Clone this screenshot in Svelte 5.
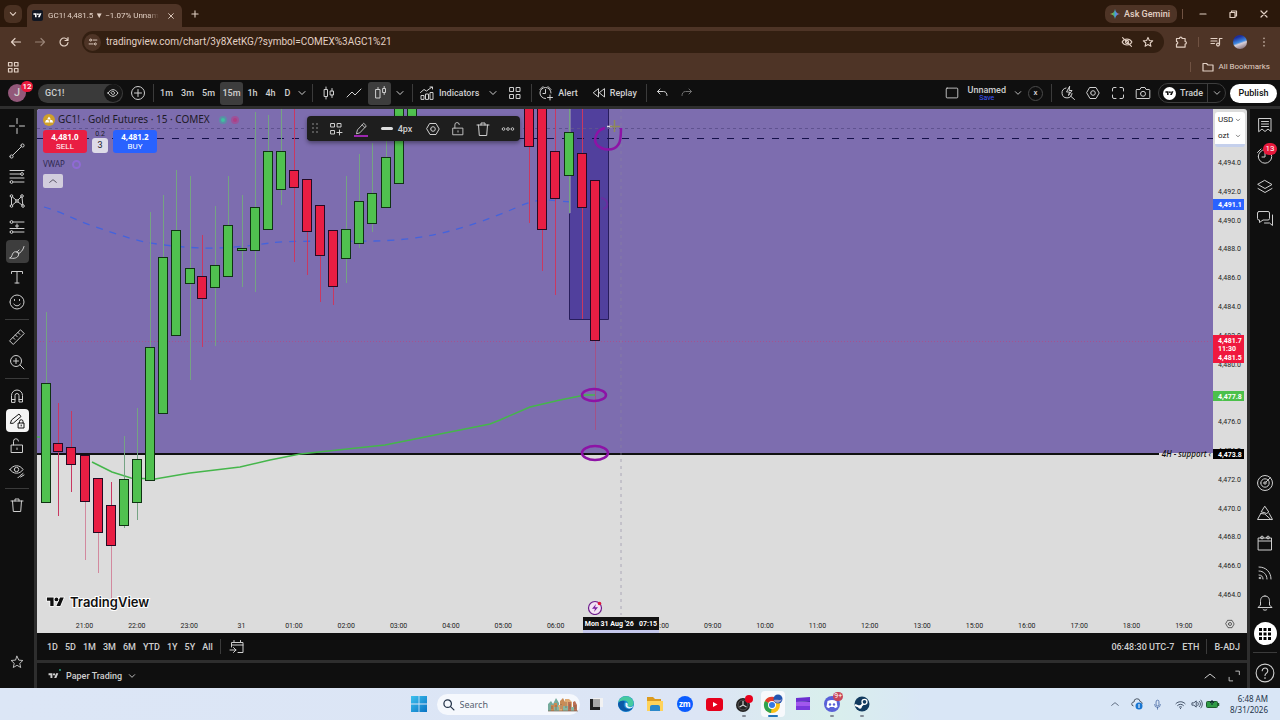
<script>
  const c = (x, y, r) => `M${x - r} ${y}a${r} ${r} 0 1 0 ${2 * r} 0a${r} ${r} 0 1 0 ${-2 * r} 0`;

  const icons = {
    down: 'M6 7.5l3 3 3-3',
    up: 'M4 11l5-4 5 4',
    close: 'M6 6l6 6M12 6l-6 6',
    plus: 'M9 5.5v7M5.5 9h7',
    back: 'M13.5 9h-9M8 5.5L4.500 9 8 12.500',
    forward: 'M4.500 9h9M10 5.500L13.500 9 10 12.500',
    reload: 'M12.500 7A4 4 0 1 0 13 9.500M13 4.500V7.500H10',
    tune: c(6, 6.5, 1.3) + c(12, 11.5, 1.3) + 'M9 6.5h5M4 11.500h5',
    apps: 'M4.500 4.500h3.500v3.500h-3.500zM10.500 4.500h3.500v3.500h-3.500zM4.500 10.500h3.500v3.500h-3.500zM10.500 10.500h3.500v3.500h-3.500z',
    eyeOff: 'M3.500 9C6 4.500 12 4.500 14.500 9C12 13.500 6 13.500 3.500 9zM4 4l10 10' + c(9, 9, 1.8),
    star: 'M9 3.800l1.500 3.500 3.800.3-2.900 2.500.9 3.700L9 11.800l-3.300 2 .9-3.700L3.700 7.600l3.800-.3z',
    bigStar: 'M9 2.500l2 4.400 4.600.4-3.500 3.200 1.100 4.700L9 12.700l-4.200 2.500 1.100-4.700L2.400 7.300 7 6.900z',
    puzzle: 'M4.500 5.500h3a1.300 1.300 0 0 1 2.600 0h3v3a1.300 1.300 0 0 1 0 2.600v3h-8.600v-3a1.300 1.300 0 0 0 0-2.600z',
    music: 'M4 5.500h6M4 8h6M4 10.500h3.500M12.500 11.500V5.500h2.500' + c(11, 11.5, 1.4),
    kebab: 'M9 5v.6M9 8.700v.6M9 12.400v.6',
    folder: 'M4 5.500h3.500l1.500 1.500h5v6h-10z',
    minimize: 'M6 9h6',
    restore: 'M6 7.500h5v5h-5zM7.500 7.500v-1.500h5v5h-1.500',
    eye: 'M4 9C7 4.500 11 4.500 14 9C11 13.500 7 13.500 4 9zM9 7.200L10.800 9 9 10.800 7.200 9z',
    plusCircle: c(9, 9, 6.5) + 'M9 5.500v7M5.500 9h7',
    candles: 'M4.500 5.500h3v7h-3zM6 3v2.500M6 12.500v2.500M10.500 7h3v4h-3zM12 4.500v2.500M12 11v2.500',
    line: 'M2 13l5-5 3 3 6-6',
    hollow: 'M5 5.500h4v8.500h-4zM7 3.500v2M12 4.500h2.500v4h-2.500zM13.200 2.500v2M13.200 8.500v2',
    indicators: 'M3 15v-3.500h3v3.500zM7.500 15v-5h3v5zM12 15v-6.500h3v6.500zM2.500 8.500l3.500-3 2.500 1.500 5.500-4M12 3h2.500v2',
    grid: 'M4 3.500h3.500v4h-3.500zM10.500 3.500h3.500v4h-3.500zM4 10.500h3.500v4h-3.500zM10.500 10.500h3.500v4h-3.500z',
    alarm: 'M14 9A5.500 5.500 0 1 0 8.500 14.500M8.500 5.500v4h-2.500M3 5.500l3-3M11 2.500l3 3M13 11v5M10.500 13.500h5',
    replay: 'M8.500 5v8L3.500 9zM14.500 5v8L9.500 9z',
    undo: 'M7 5L4.500 7.500 7 10M4.500 7.500h6c2.500 0 3.500 2 3.500 4',
    redo: 'M11 5l2.500 2.500L11 10M13.500 7.500h-6c-2.500 0-3.500 2-3.500 4',
    layout: 'M3.500 3.500h11a1 1 0 0 1 1 1v9a1 1 0 0 1-1 1h-11a1 1 0 0 1-1-1v-9a1 1 0 0 1 1-1z',
    quick: 'M7 4A5 5 0 1 0 13 9.500M11.500 12l4 3.500M10.500 2.500L7.500 8h3l-1 3.500L13 6.500h-2.500z',
    gear: 'M6 3.500h6l3.200 5.500-3.200 5.500H6L2.800 9z' + c(9, 9, 2.3),
    fullscreen: 'M3.500 7V5a1.500 1.500 0 0 1 1.500-1.500h2M11 3.500h2a1.500 1.500 0 0 1 1.500 1.500v2M14.500 11v2a1.500 1.500 0 0 1-1.500 1.500h-2M7 14.500H5a1.500 1.500 0 0 1-1.500-1.500v-2',
    camera: 'M3 5.500h3l1-2h4l1 2h3a.8.8 0 0 1 .8.8v7.400a.8.8 0 0 1-.8.8H3a.8.8 0 0 1-.8-.8V6.300a.8.8 0 0 1 .8-.8z' + c(9, 9.8, 2.5),
    cross: 'M9 1.500v5M9 11.500v5M1.500 9h5M11.500 9h5',
    trend: c(3.5, 14.5, 1.6) + c(14.5, 3.5, 1.6) + 'M4.700 13.300l8.600-8.600',
    fib: 'M2 3.500h14M2 7h10.500M2 11h14M5.500 15h10.500' + c(14, 7, 1.4) + c(3.5, 15, 1.4),
    pattern: c(3.5, 4, 1.3) + c(14, 4, 1.3) + c(3.5, 14, 1.3) + c(15, 14, 1.3) + c(9, 9, 1.3) + 'M3.500 5.300v7.400M14 5.300l.8 7.400M4.500 5l3.500 3M13 5l-3 3M4.500 13l3.500-3M10 10l4 3',
    forecast: c(3.5, 4, 1.4) + c(3.5, 14, 1.4) + 'M5 4h11M5 14h11M2 10.500h14M9 6v4.500M7.500 8h3',
    brush: 'M2 15c2.500-1 1.500-3.500 3.500-5.500 2-1.800 5.500 0 5 2.500-.6 3-4.500 4-8.500 3zM8.500 8.800c1.500-.3 2.500 1 2.300 2.200M10.500 10.500c2-.5 4.500-3 5.500-7M9.500 8.500l1.500-1.500',
    text: 'M3.500 5.500v-2h11v2M9 3.500v11.500M7 15h4',
    smile: c(9, 9, 7) + 'M5.800 11c1.500 2.500 5 2.500 6.400 0M6.500 6.500v1M11.500 6.500v1',
    ruler: 'M1.800 12.500L12.500 1.800l3.700 3.700L5.500 16.200zM5 9.500l1.800 1.800M7.500 7l1.800 1.800M10 4.500l1.800 1.800',
    zoom: c(8, 8, 5.5) + 'M12 12l4 4M8 5.500v5M5.500 8h5',
    magnet: 'M3.500 15V8.500a5.500 5.500 0 0 1 11 0V15h-3.500V8.500a2 2 0 0 0-4 0V15zM3.500 12.500h3.500M11 12.500h3.500',
    pencilLock: 'M2.500 11l1-3L11 2l2 2.500-7.500 6.500zM10.500 11h5.500v5h-5.500zM11.500 11V9.500a1.700 1.700 0 0 1 3.500 0V11M13.200 13v1',
    lock: 'M3.500 8h11v7.500h-11zM5.500 8V4.500a2.500 2.500 0 0 1 5-.5M9 11v1.500',
    hide: 'M2 7.500C5 2.500 12 2.500 15 7.500C12 12.500 5 12.500 2 7.500zM10 15.500c2-.2 1.500-2 3-2.500l2-1.500M12.500 15l3.500-2' + c(8.5, 7.5, 2.2),
    trash: 'M3 5h12M7 5V3h4v2M4.500 5l.8 10.500h7.400L13.500 5',
    pencil: 'M4 14l1-4 7-7.500 3 3L8 13z M10.500 4.500l3 3',
    addGrid: 'M4 3.500h3.500v3.500h-3.500zM10.500 3.500h3.500v3.500h-3.500zM4 10.500h3.500v3.500h-3.500zM12.500 10v5M10 12.500h5',
    more: c(4, 9, 1.5) + c(9, 9, 1.5) + c(14, 9, 1.5),
    calendarGo: 'M3.500 9V4.500h11.500v10h-5M3.500 7h11.500M6 2.500v2M12.500 2.500v2M2 12h6M5.500 9.500L8 12l-2.500 2.500',
    watch: 'M3 2.500h12v13l-3-2.500-3 2.500-3-2.500-3 2.500zM5.500 5.500h7M5.500 8h7M5.500 10.500h7',
    clock: c(9, 9.5, 6.7) + 'M9 5v5h-3M1.500 5.500l3.500-3.500',
    layers: 'M9 2.500l7 4-7 4-7-4zM2 10.500l7 4 7-4',
    chat: 'M3 2.500h9a1.500 1.500 0 0 1 1.500 1.500v5.500a1.500 1.500 0 0 1-1.500 1.500H7l-3.500 2.500V11H3a1.500 1.500 0 0 1-1.500-1.500V4A1.500 1.500 0 0 1 3 2.500zM16.500 6v10.500L13.500 14H8.500',
    target: c(9, 9, 7.5) + c(9, 9, 4.2) + c(9, 9, 1.2) + 'M10 8l4.500-4.500',
    mountain: 'M9 2.500l3.800 5.500-2.300 1.500L8 8.500 5.500 8zM4.800 9.500L1.500 15.500h15L13.200 9.500M4.800 9.500l4 .5 6 5.500',
    calendar: 'M2.500 4h13v12h-13zM2.500 7h13' + c(6, 3.5, 1.4) + c(12, 3.5, 1.4),
    feed: 'M3 3c7 0 12 5 12 12M3 7c4.500 0 8 3.500 8 8M3 11c2.500 0 4 1.500 4 4' + c(4, 14, .8),
    bell: 'M9 2c3.500 0 4.500 2.500 4.500 5.500v3.500l2.500 2.500H2L4.500 11V7.500C4.500 4.500 5.500 2 9 2zM7 15.500c.5 1 3.500 1 4 0',
    help: c(9, 9, 8) + 'M6.500 7a2.500 2.500 0 1 1 4 2c-1 .7-1.500 1-1.500 2.200M9 13v1',
    expand: 'M11 3.500h4v4M3.500 10.500v4h4',
    search: c(8, 8, 4.5) + 'M11.500 11.500l4 4',
    mic: 'M7 5a2 2 0 0 1 4 0v4a2 2 0 0 1-4 0zM5 9a4 4 0 0 0 8 0M9 13v2.500',
    wifi: 'M3.500 8c3-3.200 8-3.200 11 0M5.500 10.200c2-2 5-2 7 0M7.500 12.200c.8-.8 2.200-.8 3 0M9 13.500v.5',
    sound: 'M3 7.500h2l3-2.500v8l-3-2.500H3zM10 7c1 1.200 1 2.800 0 4M12 5.500c2 2 2 5 0 7M14 4c2.500 3 2.500 7 0 10'
  };

  // x, wick top, body top, body bottom, wick bottom, rising
  const candles = [
    [46, 312, 383, 502, 502, 1], [58, 403, 443, 451, 516, 0], [71, 411, 447, 464, 492, 0],
    [85, 455, 455, 501, 560, 0], [98, 478, 478, 532, 573, 0], [111, 482, 505, 545, 610, 0],
    [124, 436, 479, 525, 528, 1], [137, 408, 459, 502, 520, 1], [150, 212, 347, 480, 480, 1],
    [163, 195, 257, 413, 413, 1], [176, 170, 230, 335, 335, 1], [190, 176, 268, 283, 380, 1],
    [202, 235, 276, 298, 347, 0], [215, 206, 265, 287, 346, 1], [228, 176, 225, 276, 276, 1],
    [242, 195, 248, 250, 287, 1], [255, 112, 207, 250, 292, 1], [268, 115, 151, 229, 229, 1],
    [281, 100, 151, 189, 205, 1], [294, 100, 170, 187, 262, 0], [307, 179, 179, 231, 275, 0],
    [320, 205, 205, 255, 302, 0], [333, 230, 230, 286, 305, 0], [346, 176, 229, 258, 283, 1],
    [359, 154, 201, 243, 248, 1], [372, 143, 193, 223, 232, 1], [386, 140, 157, 207, 207, 1],
    [399, 100, 100, 183, 183, 1], [412, 100, 100, 116, 116, 1], [529, 100, 100, 146, 223, 0],
    [542, 100, 100, 229, 271, 0], [555, 100, 151, 198, 295, 0], [569, 100, 132, 175, 213, 1],
    [582, 100, 153, 207, 319, 0], [595, 180, 180, 340, 430, 0]
  ];

  // The 07:00 slot is left free for the crosshair's time stamp.
  const hours = ['21:00', '22:00', '23:00', '31', '01:00', '02:00', '03:00', '04:00', '05:00', '06:00', '', '08:00', '09:00', '10:00', '11:00', '12:00', '13:00', '15:00', '16:00', '17:00', '18:00', '19:00'];
  const prices = Array.from({ length: 16 }, (_, i) => ({ y: 56 + i * 28.8, text: `4,${494 - i * 2}.0` })).filter((p) => p.text !== '4,478.0');
  const tags = [
    [90, 11, '#2962ff', [['4,491.1', 98]]],
    [226, 28, '#f0183e', [['4,481.7', 234], ['11:30', 242], ['4,481.5', 251]]],
    [282, 10, '#4bc04b', [['4,477.8', 290]]],
    [340, 10, '#000', [['4,473.8', 348]]]
  ];

  const drawTools = [
    ['cross', 'trend', 'fib', 'pattern', 'forecast', 'brush', 'text', 'smile'],
    ['ruler', 'zoom'],
    ['magnet', 'pencilLock', 'lock', 'hide'],
    ['trash']
  ];
  const frames = ['1m', '3m', '5m', '15m', '1h', '4h', 'D'];
  const ranges = ['1D', '5D', '1M', '3M', '6M', 'YTD', '1Y', '5Y', 'All'];
  let frame = $state('15m');
  let query = $state('');
</script>

{#snippet icon(name, size = 18)}
  <svg class="icon" width={size} height={size} viewBox="0 0 18 18" aria-hidden="true"><path d={icons[name]} /></svg>
{/snippet}

{#snippet mark(width)}
  <svg class="mark" {width} height={width / 2} viewBox="0 3 36 20" aria-hidden="true"><path d="M14 22H7V11H0V4h14zM28 22h-8l7.500-18h8z" /><circle cx="20" cy="8" r="4" /></svg>
{/snippet}

<div class="screen">
  <header class="browser">
    <div class="tabs">
      <button class="tab-search" aria-label="Search tabs">{@render icon('down', 16)}</button>
      <div class="tab">
        <span class="favicon">{@render mark(9)}</span>
        <span class="tab-title">GC1! 4,481.5 ▼ −1.07% Unnam</span>
        <button aria-label="Close tab">{@render icon('close', 14)}</button>
      </div>
      <button class="new-tab" aria-label="New tab">{@render icon('plus', 16)}</button>
      <span class="grow"></span>
      <button class="gemini">
        <svg width="10" height="10" viewBox="0 0 10 10"><defs><linearGradient id="gem"><stop offset="0" stop-color="#ffd23f" /><stop offset=".35" stop-color="#4fb56c" /><stop offset=".6" stop-color="#4b8df8" /><stop offset="1" stop-color="#e0645c" /></linearGradient></defs><path fill="url(#gem)" d="M5 0C5.500 3 7 4.500 10 5C7 5.500 5.500 7 5 10C4.500 7 3 5.500 0 5C3 4.500 4.500 3 5 0z" /></svg>
        Ask Gemini
      </button>
      <i class="vr warm"></i>
      <button class="win" aria-label="Minimize">{@render icon('minimize')}</button>
      <button class="win" aria-label="Restore">{@render icon('restore')}</button>
      <button class="win" aria-label="Close">{@render icon('close')}</button>
    </div>
    <div class="address">
      <button class="nav" aria-label="Back">{@render icon('back')}</button>
      <button class="nav dim" aria-label="Forward">{@render icon('forward')}</button>
      <button class="nav" aria-label="Reload">{@render icon('reload')}</button>
      <div class="url">
        <button class="site" aria-label="Site information">{@render icon('tune', 14)}</button>
        <input aria-label="Address" value="tradingview.com/chart/3y8XetKG/?symbol=COMEX%3AGC1%21" />
        <button aria-label="Tracking blocked">{@render icon('eyeOff', 16)}</button>
        <button aria-label="Bookmark">{@render icon('star', 16)}</button>
      </div>
      <button class="ext" aria-label="Extensions">{@render icon('puzzle')}</button>
      <i class="vr warm"></i>
      <button class="ext" aria-label="Media">{@render icon('music')}</button>
      <button class="profile" aria-label="Profile"></button>
      <button class="ext" aria-label="Menu">{@render icon('kebab')}</button>
    </div>
    <div class="bookmarks">
      <button aria-label="Apps">{@render icon('apps')}</button>
      <span class="grow"></span>
      <i class="vr warm"></i>
      <button class="all">{@render icon('folder', 18)}All Bookmarks</button>
    </div>
  </header>

  <div class="app">
    <nav class="topbar">
      <button class="avatar" aria-label="Account"><span class="user">J</span><span class="badge">12</span></button>
      <button class="symbol">GC1!<span class="round">{@render icon('eye')}</span></button>
      <button class="w30" aria-label="Compare">{@render icon('plusCircle')}</button>
      <i class="vr"></i>
      <div class="frames">
        {#each frames as f}
          <button class:on={frame === f} onclick={() => (frame = f)}>{f}</button>
        {/each}
        <button aria-label="More intervals">{@render icon('down')}</button>
      </div>
      <i class="vr"></i>
      <div class="styles">
        <button class="w25" aria-label="Candles">{@render icon('candles')}</button>
        <button class="w25" aria-label="Line">{@render icon('line')}</button>
        <button class="hollow on" aria-label="Hollow candles">{@render icon('hollow')}</button>
        <button class="w18" aria-label="More styles">{@render icon('down')}</button>
      </div>
      <i class="vr"></i>
      <button class="labelled">{@render icon('indicators')}Indicators</button>
      <button class="w27" aria-label="Favourite indicators">{@render icon('down')}</button>
      <button class="w18" aria-label="Templates">{@render icon('grid')}</button>
      <i class="vr after"></i>
      <button class="labelled">{@render icon('alarm')}Alert</button>
      <button class="labelled replay">{@render icon('replay')}Replay</button>
      <i class="vr after"></i>
      <button class="w25" aria-label="Undo">{@render icon('undo')}</button>
      <button class="w25 dim" aria-label="Redo">{@render icon('redo')}</button>
      <span class="grow"></span>
      <button class="w23" aria-label="Layout">{@render icon('layout', 16)}</button>
      <button class="saved">Unnamed<small>Save</small></button>
      <button class="w18" aria-label="Layouts">{@render icon('down', 16)}</button>
      <button class="xcircle" aria-label="Close layout">x</button>
      <i class="vr"></i>
      <div class="tools">
        <button class="w25" aria-label="Quick search">{@render icon('quick')}</button>
        <button class="w25" aria-label="Settings">{@render icon('gear')}</button>
        <button class="w25" aria-label="Fullscreen">{@render icon('fullscreen')}</button>
        <button class="w25" aria-label="Snapshot">{@render icon('camera')}</button>
      </div>
      <div class="trade">
        <button class="trade-main"><span class="disc">{@render mark(9)}</span>Trade</button>
        <button class="trade-more" aria-label="Trade options">{@render icon('down', 16)}</button>
      </div>
      <button class="publish">Publish</button>
    </nav>

    <div class="body">
      <aside class="left">
        {#each drawTools as group, g}
          {#if g}<hr />{/if}
          <div class="group">
            {#each group as tool}
              <button class="tool" class:on={tool === 'brush'} class:locked={tool === 'pencilLock'} aria-label={tool}>{@render icon(tool)}</button>
            {/each}
          </div>
        {/each}
        <span class="grow"></span>
        <button class="tool fav" aria-label="Favourites">{@render icon('bigStar', 16)}</button>
      </aside>

      <main>
        <section class="chart">
          <div class="plot">
            <svg class="canvas" width="100%" height="100%">
              <rect width="100%" height="345" fill="#7d6daf" />
              <g transform="translate(-37 -109)">
                <rect x="569" y="100" width="39" height="219" fill="#51409d" />
                <rect x="569" y="100" width="2" height="113" fill="#7d76a6" />
                <path class="edge" d="M569.500 214v105.500h39v-219" />
              </g>
              <line class="thin" x1="0" x2="100%" y1="19.500" y2="19.500" />
              <line class="dash" x1="0" x2="100%" y1="29.500" y2="29.500" />
              <line class="last" x1="0" x2="100%" y1="232.500" y2="232.500" />
              <line x1="0" x2="100%" y1="345" y2="345" stroke="#111" stroke-width="2" />
              <g transform="translate(-37 -109)">
                <path class="blue" d="M44 207C65 213 75 220 90 225S130 239 145 242S180 247 200 248S250 246 270 243S340 242 375 241S430 236 450 231S495 217 520 206S555 203 582 202" />
                <path class="green" d="M37 437h3M92 462L112 472L131 478L155 479L190 473L240 467L270 460L300 454L385 445L430 436L490 424L500 420L530 407L560 400L585 395L595 395" />
                {#each candles as [x, high, top, bottom, low, rising]}
                  <line x1={x + 0.5} x2={x + 0.5} y1={high} y2={top} class:rising={rising} class="wick" />
                  <line x1={x + 0.5} x2={x + 0.5} y1={bottom} y2={low} class:rising={rising} class="wick" class:faint={low > 550 || x === 595} />
                  <rect x={x - 4.5} y={top + 0.5} width="9" height={bottom - top} class="bar" class:rising={rising} />
                {/each}
                <path class="cross-line" d="M621 109V615" />
                <ellipse class="ink" cx="594" cy="395" rx="12" ry="6" />
                <ellipse class="ink" cx="595" cy="453" rx="13" ry="7" />
                <path class="ink" d="M605 128C596 130 593 140 597 145C603 151 614 151 618 145C621 142 621 135 621 128" />
                <path class="ink soft" d="M601 198C608 199 610 207 603 209" />
                <path d="M607 126.500h5" stroke="#ddd" stroke-width="1.500" /><path d="M614.500 120v12M610 126.500h10" stroke="#8f8a5a" stroke-width="1.500" />
                <g transform="translate(595 608)"><circle r="6.500" fill="#f3e3f5" stroke="#6d1b8c" stroke-width="1.200" /><path d="M1 -4L-3 .8H0L-1 4L3 -.8H0z" fill="#7b1fa2" /><circle cx="4.500" cy="-4.500" r="1.800" fill="#e0183c" /></g>
              </g>
            </svg>
            <span class="support">4H - support&nbsp;‹</span>
            <div class="legend">
              <h1>
                <svg width="12" height="12" viewBox="0 0 12 12"><circle cx="6" cy="6" r="6" fill="#cfa02a" /><path d="M6 2.500L8 5.500H4zM3 6h2.500l.7 2.500H2zM6.800 6h2.400l1 2.500H6.500z" fill="#fff" /></svg>
                GC1! · Gold Futures · 15 · COMEX
                <i class="dot open"></i><i class="dot delay"></i>
              </h1>
              <div class="quotes">
                <button class="sell"><b>4,481.0</b>SELL</button>
                <span class="spread">0.2<b>3</b></span>
                <button class="buy"><b>4,481.2</b>BUY</button>
              </div>
              <p class="study">VWAP <i></i></p>
              <button class="fold" aria-label="Collapse">{@render icon('up', 12)}</button>
            </div>
            <div class="floating">
              <span class="grip"></span>
              <button aria-label="Template">{@render icon('addGrid')}</button>
              <button class="color" aria-label="Line colour">{@render icon('pencil', 16)}</button>
              <button class="thick"><i></i>4px</button>
              <button aria-label="Settings">{@render icon('gear')}</button>
              <button aria-label="Lock">{@render icon('lock', 16)}</button>
              <button aria-label="Remove">{@render icon('trash')}</button>
              <button aria-label="More">{@render icon('more', 16)}</button>
            </div>
            <div class="brand">{@render mark(19)}TradingView</div>
          </div>
          <div class="price-axis">
            <svg width="100%" height="100%">
              {#each prices as p}
                <text x="5" y={p.y}>{p.text}</text>
              {/each}
              {#each tags as [y, h, fill, lines]}
                <rect x="0" {y} width="31" height={h} {fill} />
                {#each lines as [t, ty]}<text class="tag" x="5" y={ty}>{t}</text>{/each}
              {/each}
            </svg>
            <div class="units">
              <button>USD {@render icon('down', 10)}</button>
              <button>ozt {@render icon('down', 10)}</button>
            </div>
          </div>
          <div class="time-axis">
            <svg width="100%" height="100%">
              {#each hours as h, i}
                {#if h}<text x={47.5 + i * 52.35} y="13" text-anchor="middle">{h}</text>{/if}
              {/each}
            </svg>
            <span class="stamp">Mon 31 Aug '26&nbsp;&nbsp; 07:15</span>
          </div>
          <button class="axis-gear" aria-label="Axis settings">{@render icon('gear', 12)}</button>
        </section>

        <footer class="ranges">
          {#each ranges as r}<button>{r}</button>{/each}
          <i class="vr"></i>
          <button aria-label="Go to date">{@render icon('calendarGo')}</button>
          <span class="grow"></span>
          <button class="wide">06:48:30 UTC-7</button>
          <button>ETH</button>
          <i class="vr"></i>
          <button>B-ADJ</button>
        </footer>
        <footer class="panel">
          {@render mark(11)}<i class="online"></i>
          <button class="paper">Paper Trading {@render icon('down', 16)}</button>
          <span class="grow"></span>
          <button aria-label="Open panel">{@render icon('up')}</button>
          <button aria-label="Maximize panel">{@render icon('expand', 16)}</button>
        </footer>
      </main>

      <aside class="right">
        <button class="side" aria-label="Watchlist">{@render icon('watch')}</button>
        <button class="side" aria-label="Alerts">{@render icon('clock')}<span class="badge">13</span></button>
        <button class="side" aria-label="Layers">{@render icon('layers')}</button>
        <button class="side" aria-label="Chat">{@render icon('chat')}</button>
        <span class="grow"></span>
        {#each ['target', 'mountain', 'calendar', 'feed', 'bell'] as name}
          <button class="side low" aria-label={name}>{@render icon(name)}</button>
        {/each}
        <button class="dots" aria-label="Products"><svg width="12" height="12" viewBox="0 0 12 12">{#each [0, 4.500, 9] as y}{#each [0, 4.500, 9] as x}<rect {x} {y} width="3" height="3" />{/each}{/each}</svg></button>
        <hr />
        <button class="side help" aria-label="Help">{@render icon('help', 20)}</button>
      </aside>
    </div>
  </div>

  <footer class="taskbar">
    <span></span>
    <div class="dock">
      <button class="start" aria-label="Start"><svg width="16" height="16" viewBox="0 0 16 16"><defs><linearGradient id="win" x2="1" y2="1"><stop offset="0" stop-color="#3ec1ee" /><stop offset="1" stop-color="#0873c4" /></linearGradient></defs><path fill="url(#win)" d="M0 0h7.600v7.600H0zM8.400 0H16v7.600H8.400zM0 8.400h7.600V16H0zM8.400 8.400H16V16H8.400z" /></svg></button>
      <label class="find">
        {@render icon('search', 15)}
        <input placeholder="Search" bind:value={query} aria-label="Search" />
        <svg width="30" height="15" viewBox="0 0 30 15"><path fill="#75ab9c" d="M0 14V7l3-3 2 3 3-6 3 5V14z" /><path fill="#c98b55" d="M3 14V8h3V6h3v8zM12 14V4l3-3 2 4v9z" /><path fill="#e0ab72" d="M10 14V8h4v6zM17 14V2h4l3 3v9z" /><path fill="#ba6f54" d="M20 5h3v9h-3zM25 14V5l2-1 2 4v6z" /><path fill="#88b5a2" d="M6 10h5v4H6zM15 9h5v5h-5zM23 10h3v4h-3z" /><path stroke="#7a6048" stroke-width=".7" d="M4 9v3M8 8v5M13 7v5M18 5v6M22 7v5M27 8v4M0 14h30" /></svg>
      </label>
      <div class="apps">
        <button aria-label="Task view"><svg width="16" height="16" viewBox="0 0 16 16"><path fill="#f2f2f2" d="M5 2h10v9H5z" /><path fill="#222" d="M2 3h3v8h7v3H2z" /><path fill="#aaa" d="M5 3h7v8H5z" /></svg></button>
        <button aria-label="Edge"><svg width="18" height="18" viewBox="0 0 18 18"><circle cx="9" cy="9" r="8" fill="#1787d4" /><path fill="#45c9a0" d="M1.500 7C3 0 14 -1 16.500 7c1 4-3 6-6 4 2-3-1-6-4-5.500S2 8 1.500 7z" /><path fill="#0c58a6" d="M1 9c1-4 6-4 7-2-2 1-2 6 3 7 2 .3 4-.5 5-1.500C13 18 2 18 1 9z" /><path fill="#e6f3fa" d="M8.500 8c1.500-1 3 .5 2 3 1.500 1.500 4 1.500 6 0-1 3-7 3.500-8 0z" /></svg></button>
        <button aria-label="Explorer"><svg width="18" height="16" viewBox="0 0 18 16"><path fill="#dc9b1e" d="M1 1h6l2 2h6v4H1z" /><path fill="#ffd35a" d="M1 5h16v10H1z" /><path fill="#2a88c9" d="M4 11q0-2 2-2h6q2 0 2 2v4H4z" /></svg></button>
        <button aria-label="Zoom"><span class="zm">zm</span></button>
        <button aria-label="YouTube"><svg width="17" height="13" viewBox="0 0 17 13"><rect width="17" height="13" rx="3" fill="#e6001c" /><path d="M7 4v5l4.500-2.500z" fill="#fff" /></svg></button>
        <button class="run" aria-label="OBS"><svg width="18" height="18" viewBox="0 0 18 18"><circle cx="8" cy="10" r="7" fill="#222" /><circle cx="8" cy="10" r="5" fill="none" stroke="#555" /><path d="M8 10V6M8 10l3.500 2M8 10l-3.500 2" stroke="#ccc" stroke-width="1.200" /><circle cx="14" cy="4" r="4" fill="#e8001c" /></svg></button>
        <button class="run front" aria-label="Chrome"><svg width="20" height="20" viewBox="0 0 20 20"><circle cx="9" cy="11" r="8" fill="#fbc116" /><path fill="#e33b2e" d="M9 11L2 7a8 8 0 0 1 14 0z" /><path fill="#2fa34f" d="M9 11L2 7a8 8 0 0 0 6 12z" /><circle cx="9" cy="11" r="4" fill="#fff" /><circle cx="9" cy="11" r="3" fill="#3478e5" /><circle cx="15" cy="5" r="4.500" fill="#2455b0" /><path d="M11 6c2-1 6 1 8-1a4.500 4.500 0 0 1-8 2z" fill="#a7a3c9" /></svg></button>
        <button aria-label="Clipchamp"><svg width="16" height="16" viewBox="0 0 16 16"><path fill="#6b2fd0" d="M1 2l14-1v4L1 6z" /><path fill="#a257ee" d="M1 6h14v4H1z" /><path fill="#7a38dc" d="M1 10h14v4H1z" /><path fill="#4b1bab" d="M1 6l14-1v1z" /></svg></button>
        <button class="run discord" aria-label="Discord"><svg width="18" height="18" viewBox="0 0 18 18"><circle cx="9" cy="9" r="8" fill="#5961d8" /><path fill="#fff" d="M4.500 6c3-1.500 6-1.500 9 0l1 6-2.500 1.300-1-1.300H7l-1 1.300L3.500 12z" /><circle cx="7" cy="9.500" r="1.200" fill="#5961d8" /><circle cx="11" cy="9.500" r="1.200" fill="#5961d8" /></svg><span>9+</span></button>
        <button class="run" aria-label="Steam"><svg width="16" height="16" viewBox="0 0 16 16"><circle cx="8" cy="8" r="7.500" fill="#123b5f" /><path d="M1 9l5 2 4-4" stroke="#fff" stroke-width="2" fill="none" /><circle cx="10.500" cy="5.800" r="2.500" fill="#123b5f" stroke="#fff" stroke-width="1.300" /><circle cx="6" cy="11" r="1.800" fill="#fff" /></svg></button>
      </div>
    </div>
    <div class="tray">
      <button class="more-tray" aria-label="Hidden icons">{@render icon('up', 12)}</button>
      <button aria-label="OneDrive"><svg width="12" height="12" viewBox="0 0 12 12"><path d="M2.500 8A2 2 0 0 1 3 4a3 3 0 0 1 6-.5A2 2 0 0 1 11 6" fill="none" stroke="#4c5866" /><circle cx="8" cy="8" r="3.500" fill="#1976d2" /><path d="M8 6v4" stroke="#fff" /></svg></button>
      <button class="mic" aria-label="Microphone">{@render icon('mic', 13)}</button>
      <button class="net" aria-label="Network, volume and battery">{@render icon('wifi', 15)}{@render icon('sound', 14)}<svg width="14" height="8" viewBox="0 0 14 8"><rect x=".5" y="1.500" width="11" height="6" rx="1" fill="#2f9b46" stroke="#1f5c2e" /><path d="M12.500 3v3" stroke="#1f5c2e" stroke-width="1.500" /><path d="M6 0v5M4 3l2-2 2 2" stroke="#123" fill="none" /></svg></button>
      <time>6:48 AM<br />8/31/2026</time>
    </div>
  </footer>
</div>

<style>
  :global(body) { margin: 0; }
  .screen { display: flex; flex-direction: column; height: 100vh; min-height: 640px; overflow: hidden; font: 9px/12px Roboto, "Liberation Sans", sans-serif; color: #cfcfcf; background: #0f0f0f; }
  button, input { font: inherit; color: inherit; background: none; border: 0; padding: 0; margin: 0; outline: 0; }
  button { display: flex; align-items: center; justify-content: center; flex: none; cursor: pointer; }
  svg { display: block; flex: none; }
  .icon { fill: none; stroke: currentColor; stroke-width: 1; stroke-linecap: round; stroke-linejoin: round; }
  .mark { fill: currentColor; }
  .grow { flex: 1; }
  .vr { flex: none; width: 1px; height: 18px; background: #3b3b3b; }
  .vr.warm { height: 10px; background: #705242; }
  .dim { opacity: .5; }

  .browser { flex: none; background: #4e3426; color: #e2d0c4; }
  .browser .icon { stroke-width: 1.200; }
  .tabs { display: flex; align-items: center; height: 27px; background: #2b180b; }
  .tab-search { width: 18px; height: 18px; margin-left: 4px; border-radius: 6px; background: #4a3122; }
  .tab { display: flex; align-items: center; align-self: flex-end; gap: 5px; width: 155px; height: 23px; margin-left: 5px; padding: 0 4px 0 5px; box-sizing: border-box; border-radius: 6px 6px 0 0; background: #4e3426; }
  .favicon { display: grid; place-items: center; width: 11px; height: 11px; border-radius: 2px; background: #111622; color: #fff; }
  .tab-title { flex: 1; overflow: hidden; white-space: nowrap; font-size: 8px; mask-image: linear-gradient(90deg, #000 90%, transparent); }
  .new-tab { width: 26px; }
  .gemini { gap: 4px; height: 18px; padding: 0 7px 0 5px; border-radius: 7px; background: #4e3426; font-size: 9px; font-weight: 500; }
  .gemini + .vr { margin-left: 5px; }
  .win { width: 30px; }
  .win:last-child { width: 32px; }
  .win:nth-last-child(3) { margin-left: 5px; }
  .address { display: flex; align-items: center; height: 30px; padding: 0 6px 0 4px; }
  .nav { width: 24px; }
  .url { display: flex; align-items: center; flex: 1; height: 22px; margin-left: 6px; padding: 0 8px 0 2px; gap: 5px; border-radius: 11px; background: #331f11; }
  .site { width: 17px; height: 17px; border-radius: 50%; background: #4e3426; }
  .url input { flex: 1; min-width: 0; font-size: 10px; }
  .ext { width: 20px; margin-left: 7px; }
  .ext + .vr { margin-left: 7px; }
  .profile { width: 14px; height: 14px; margin-left: 7px; border-radius: 50%; background: linear-gradient(160deg, #1b2d9c 20%, #3f8ae0 50%, #d8cfd8 60%, #6c5560); }
  .bookmarks { display: flex; align-items: center; height: 23px; padding: 0 10px 4px 4px; box-sizing: border-box; }
  .bookmarks .vr { margin-right: 8px; }
  .all { font-size: 8px; gap: 1px; }

  .app { display: flex; flex-direction: column; flex: 1; min-height: 0; background: #2e2e2e; }
  .topbar { display: flex; align-items: center; flex: none; height: 26px; padding: 0 3px 0 8px; background: #0f0f0f; font-weight: 500; }
  .avatar { position: relative; }
  .user { display: grid; place-items: center; width: 18px; height: 18px; border-radius: 50%; background: #93587a; font-size: 11px; }
  .badge { position: absolute; left: 13px; top: -3px; width: 12px; height: 11px; border-radius: 6px; background: #e8193c; color: #fff; font-size: 8px; line-height: 11px; text-align: center; }
  .symbol { justify-content: space-between; width: 85px; height: 19px; margin-left: 12px; padding: 0 1px 0 7px; border-radius: 10px; background: #3a3a3a; box-sizing: border-box; }
  .round { display: grid; place-items: center; width: 18px; height: 18px; border-radius: 50%; background: #161616; }
  .w30 { width: 30px; }
  .w27 { width: 27px; }
  .w25 { width: 25px; }
  .w23 { width: 23px; }
  .w18 { width: 18px; }
  .frames { display: flex; padding: 0 4px 0 2px; }
  .frames button { width: 17px; height: 23px; border-radius: 3px; }
  .frames button:nth-child(-n + 3) { width: 21px; }
  .frames button:nth-child(4) { width: 23px; margin: 0 1px; }
  .frames button:nth-child(5) { margin-right: 1px; }
  .frames button:last-child { width: 12px; }
  .on { background: #3d3d3d; }
  .styles { display: flex; padding: 0 3px; }
  .styles button { height: 23px; border-radius: 3px; }
  .hollow { width: 23px; margin-left: 2px; }
  .labelled { gap: 3px; margin-left: 5px; }
  .labelled.replay { margin-left: 12px; gap: 2px; }
  .vr.after { margin-left: 7px; }
  .topbar .replay + .vr { margin: 0 3px 0 9px; }
  .saved { flex-direction: column; margin-left: 4px; line-height: 10px; }
  .saved small { font-size: 7px; line-height: 7px; font-weight: 400; color: #3f57ff; }
  .saved + button { margin-left: 3px; }
  .xcircle { width: 15px; height: 15px; box-sizing: border-box; margin: 0 8px 0 1px; border: 1px solid #4a4a4a; border-radius: 50%; font-size: 8px; }
  .tools { display: flex; padding: 0 3px; }
  .trade { display: flex; align-items: center; height: 18px; border: 1px solid #3d3d3d; border-radius: 10px; }
  .trade-main { gap: 4px; width: 48px; font-size: 9px; }
  .disc { display: grid; place-items: center; width: 13px; height: 13px; border-radius: 50%; background: #fff; color: #0f0f0f; }
  .trade-more { width: 18px; height: 18px; border-left: 1px solid #3d3d3d; }
  .publish { width: 47px; height: 19px; margin-left: 4px; border-radius: 10px; background: #fff; color: #0f0f0f; }

  .body { display: flex; flex: 1; gap: 3px; min-height: 0; padding-top: 3px; }
  .left, .right { display: flex; flex-direction: column; align-items: center; flex: none; background: #0f0f0f; }
  .left { width: 34px; padding-top: 4px; box-sizing: border-box; }
  .group { display: grid; place-items: center; flex: none; height: 202px; }
  .group:nth-of-type(2) { height: 50px; }
  .group:nth-of-type(3) { height: 101px; }
  .group:nth-of-type(4) { height: 23px; }
  hr { flex: none; width: 24px; height: 1px; margin: 4px 0; border: 0; background: #3b3b3b; }
  .tool { width: 23px; height: 23px; border-radius: 4px; }
  .locked { background: #f4f4f4; color: #111; }
  .fav { margin-bottom: 15px; }
  .right { width: 30px; }
  .side { position: relative; width: 30px; height: 31px; }
  .side.low { height: 30px; }
  .side .badge { left: 13px; top: 3px; width: 14px; height: 12px; line-height: 12px; }
  .dots { width: 23px; height: 23px; margin-top: 4px; border-radius: 50%; background: #fff; color: #111; }
  .right hr { margin: 7px 0 4px; }

  main { display: flex; flex-direction: column; flex: 1; min-width: 0; background: #2e2e2e; }
  .chart { display: grid; grid-template: minmax(0, 1fr) 18px / minmax(0, 1fr) 34px; flex: 1; min-height: 0; overflow: hidden; border-radius: 3px 3px 0 0; background: #dcdcdc; }
  .plot { position: relative; overflow: hidden; }
  .canvas { position: absolute; inset: 0; }
  .edge { fill: none; stroke: #281d5c; }
  .thin { stroke: #5f5290; stroke-dasharray: 3 3; }
  .dash { stroke: #15104a; stroke-dasharray: 7 8; }
  .last { stroke: #c0417d; stroke-dasharray: 1 2; opacity: .6; }
  .blue { fill: none; stroke: #4463dc; stroke-width: 1.300; stroke-dasharray: 7 7; }
  .green { fill: none; stroke: #45b64b; stroke-width: 1.500; }
  .wick { stroke: #c93861; }
  .wick.rising { stroke: #75a383; }
  .wick.faint { opacity: .5; }
  .bar { fill: #e91e43; stroke: #250b24; }
  .bar.rising { fill: #50c14f; stroke: #103313; }
  .cross-line { stroke: #8b84a0; stroke-dasharray: 3 4; opacity: .6; }
  .ink { fill: none; stroke: #8d13a6; stroke-width: 2.500; }
  .soft { opacity: .4; stroke-width: 2; }
  .support { position: absolute; right: 0; top: 339px; padding: 0 2px 0 3px; font: italic 500 8px/12px "Noto Sans", sans-serif; color: #111; background: linear-gradient(#7d6daf 5px, #dcdcdc 5px); }
  .legend { position: absolute; left: 6px; top: 3px; color: #1c1a28; }
  h1 { display: flex; align-items: center; gap: 3px; height: 15px; margin: 0; font: 400 10px/15px "Noto Sans", sans-serif; }
  .dot { width: 4px; height: 4px; margin-left: 6px; border: 2px solid #5b8ea6; border-radius: 50%; background: #3fc0a0; }
  .dot.delay { margin-left: 1px; border-color: #9d5299; background: #ad3f85; }
  .quotes { display: flex; gap: 5px; height: 23px; margin-top: 3px; }
  .sell, .buy { flex-direction: column; width: 44px; height: 23px; border-radius: 3px; color: #fff; font-size: 8px; line-height: 9px; background: #e91e43; }
  .buy { background: #2962ff; }
  .sell b, .buy b { font: 700 8px/10px "Noto Sans", sans-serif; }
  .spread { width: 16px; font-size: 7px; line-height: 8px; text-align: center; }
  .spread b { display: block; height: 15px; border-radius: 3px; background: #dedbe8; font: 400 9px/15px Roboto, sans-serif; }
  .study { display: flex; align-items: center; gap: 7px; height: 12px; margin: 5px 0 4px; color: #2f2950; font: 8px/12px "Noto Sans", sans-serif; }
  .study i { width: 5px; height: 5px; border: 2px solid #8f6ad4; border-radius: 50%; }
  .fold { width: 20px; height: 14px; border-radius: 2px; background: #d2cddd; }
  .floating { position: absolute; left: 270px; top: 7px; display: flex; align-items: center; height: 25px; padding-left: 5px; border-radius: 4px; background: #1e1e1e; box-shadow: 0 2px 4px #0006; }
  .floating button { width: 25px; height: 25px; }
  .grip { width: 6px; height: 12px; margin-right: 5px; background: radial-gradient(circle at 1px 1px, #555 1px, transparent 1px) 0 0 / 4px 4px; }
  .floating .color { position: relative; }
  .color::after { content: ""; position: absolute; left: 6px; bottom: 4px; width: 14px; height: 2px; background: #9c27b0; }
  .floating .thick { gap: 5px; width: 47px; font-weight: 500; }
  .thick i { width: 12px; height: 3px; border-radius: 2px; background: #ddd; }
  .brand { position: absolute; left: 9px; bottom: 4px; display: flex; align-items: center; gap: 5px; color: #111; font: 600 13px/18px Inter, sans-serif; paint-order: stroke; -webkit-text-stroke: 2px #fff; }
  .brand :global(.mark) { overflow: visible; stroke: #fff; stroke-width: 3; paint-order: stroke; }
  text { font: 400 7px Roboto, sans-serif; fill: #222; }
  .tag { fill: #fff; font-weight: 700; }
  .price-axis { position: relative; }
  .units { position: absolute; left: 2px; top: 3px; width: 30px; border-radius: 3px; background: #fff; color: #222; border-bottom: 3px solid #c5d0ec; }
  .units button { justify-content: space-between; width: 30px; height: 16px; padding: 0 2px 0 3px; box-sizing: border-box; font-size: 8px; }
  .time-axis { position: relative; overflow: hidden; }
  .stamp { position: absolute; left: 546px; top: 2px; width: 76px; height: 13px; background: #111; color: #fff; font: 700 7px/14px Roboto, sans-serif; text-align: center; box-shadow: 0 3px #c5c8ec; }
  .axis-gear { color: #222; }

  .ranges, .panel { display: flex; align-items: center; flex: none; background: #0f0f0f; }
  .ranges { gap: 7px; height: 27px; padding: 0 7px 0 10px; font-weight: 500; }
  .ranges .vr { height: 15px; }
  .ranges button { height: 24px; }
  .ranges .wide { margin-right: 1px; }
  .panel { height: 25px; margin-top: 3px; padding: 0 1px 0 11px; font-weight: 500; }
  .panel > button { width: 24px; }
  .online { width: 2px; height: 2px; margin-top: -12px; border-radius: 50%; background: #2aa889; }
  .panel > .paper { width: auto; gap: 2px; margin-left: 5px; }

  .taskbar { display: grid; grid-template-columns: 1fr auto 1fr; align-items: center; flex: none; height: 32px; background: linear-gradient(90deg, #dce6f6, #dce5f5 55%, #d9efec 65%, #d9e6f6 72%); color: #24344a; }
  .dock { display: flex; align-items: center; }
  .start { width: 30px; }
  .find { display: flex; align-items: center; gap: 4px; width: 143px; height: 21px; margin: 0 2px 0 3px; padding: 0 2px 0 4px; box-sizing: border-box; border-radius: 11px; background: #f5f8fd; }
  .find input { flex: 1; min-width: 0; font: 9px "Noto Sans", sans-serif; }
  .find input::placeholder { color: #566070; opacity: 1; }
  .find .icon { stroke-width: 1.500; }
  .apps { display: grid; grid-template-columns: repeat(10, 1fr); justify-items: center; width: 295px; }
  .apps button { position: relative; width: 24px; height: 26px; border-radius: 4px; }
  .run::after { content: ""; position: absolute; left: 10px; bottom: 0; width: 4px; height: 2px; border-radius: 1px; background: #858c98; }
  .run.front { background: #f7f9fc; }
  .run.front::after { left: 7px; width: 10px; background: #2275b8; }
  .zm { width: 16px; height: 16px; border-radius: 50%; background: #0b5cff; color: #fff; font: 700 8px/15px "Noto Sans", sans-serif; }
  .discord span { position: absolute; right: 1px; top: 1px; width: 10px; border-radius: 5px; background: #c8475a; color: #fff; font-size: 7px; line-height: 9px; }
  .tray { display: flex; align-items: center; justify-content: flex-end; gap: 8px; padding-right: 12px; font: 8px/11px "Noto Sans", sans-serif; }
  .tray time { width: 40px; text-align: right; }
  .more-tray { margin-right: 2px; }
  .net { gap: 2px; margin-left: 1px; }
  .tray .mic { color: #365a9b; }
</style>
